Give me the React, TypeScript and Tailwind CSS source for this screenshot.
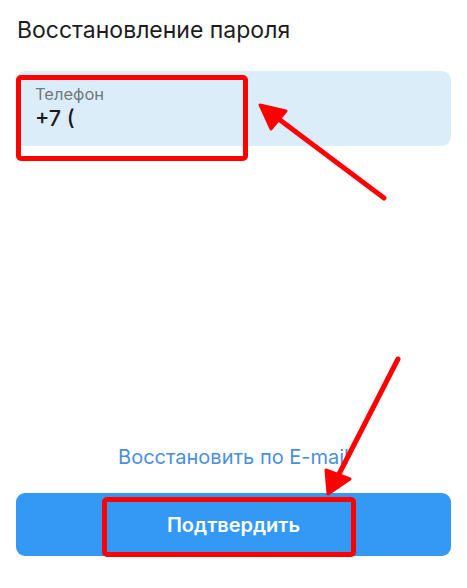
export default function App() {
  return (
    <div className="relative h-[588px] w-[467px] bg-white font-['Inter',sans-serif] overflow-hidden">
      <div className="flex h-full flex-col px-4 pb-8">
        <h1 className="pt-[16px] pl-px text-[23px] leading-[29px] font-normal text-[#1c1c1e]">
          Восстановление пароля
        </h1>

        {/* phone field */}
        <div className="mt-[26px] h-[75px] w-full rounded-[9px] bg-[#dcedfa] px-[19px] pt-[14px]">
          <div className="text-[16.5px] leading-[19px] font-normal text-[#73787d]">Телефон</div>
          <div className="mt-[2px] text-[21.5px] leading-[25px] font-medium text-[#1a1a1a]">+7 (</div>
        </div>

        <div className="flex-1" />

        <div className="mb-[24px] text-center text-[20px] leading-[24px] font-normal text-[#4a8fe0]">
          Восстановить по E-mail
        </div>

        <button className="h-[63px] w-full rounded-[9px] bg-[#3399f4] text-[20px] font-semibold text-white">
          Подтвердить
        </button>
      </div>

      {/* annotations */}
      <div className="pointer-events-none absolute left-[16px] top-[75px] h-[86px] w-[232px] rounded-[5px] border-[5px] border-[#ff0000]" />
      <div className="pointer-events-none absolute left-[102px] top-[497px] h-[60px] w-[254px] rounded-[5px] border-[5px] border-[#ff0000]" />
      <svg className="pointer-events-none absolute inset-0" width="467" height="588" viewBox="0 0 467 588">
        <line x1="384" y1="198" x2="272" y2="114" stroke="#ff0000" strokeWidth="5" strokeLinecap="round" />
        <polygon points="260,105 286,111 271,129" fill="#ff0000" stroke="#ff0000" strokeWidth="3" strokeLinejoin="round" />
        <line x1="398" y1="359" x2="337" y2="478" stroke="#ff0000" strokeWidth="5" strokeLinecap="round" />
        <polygon points="328,494 326,470 350,479" fill="#ff0000" stroke="#ff0000" strokeWidth="3" strokeLinejoin="round" />
      </svg>
    </div>
  );
}
